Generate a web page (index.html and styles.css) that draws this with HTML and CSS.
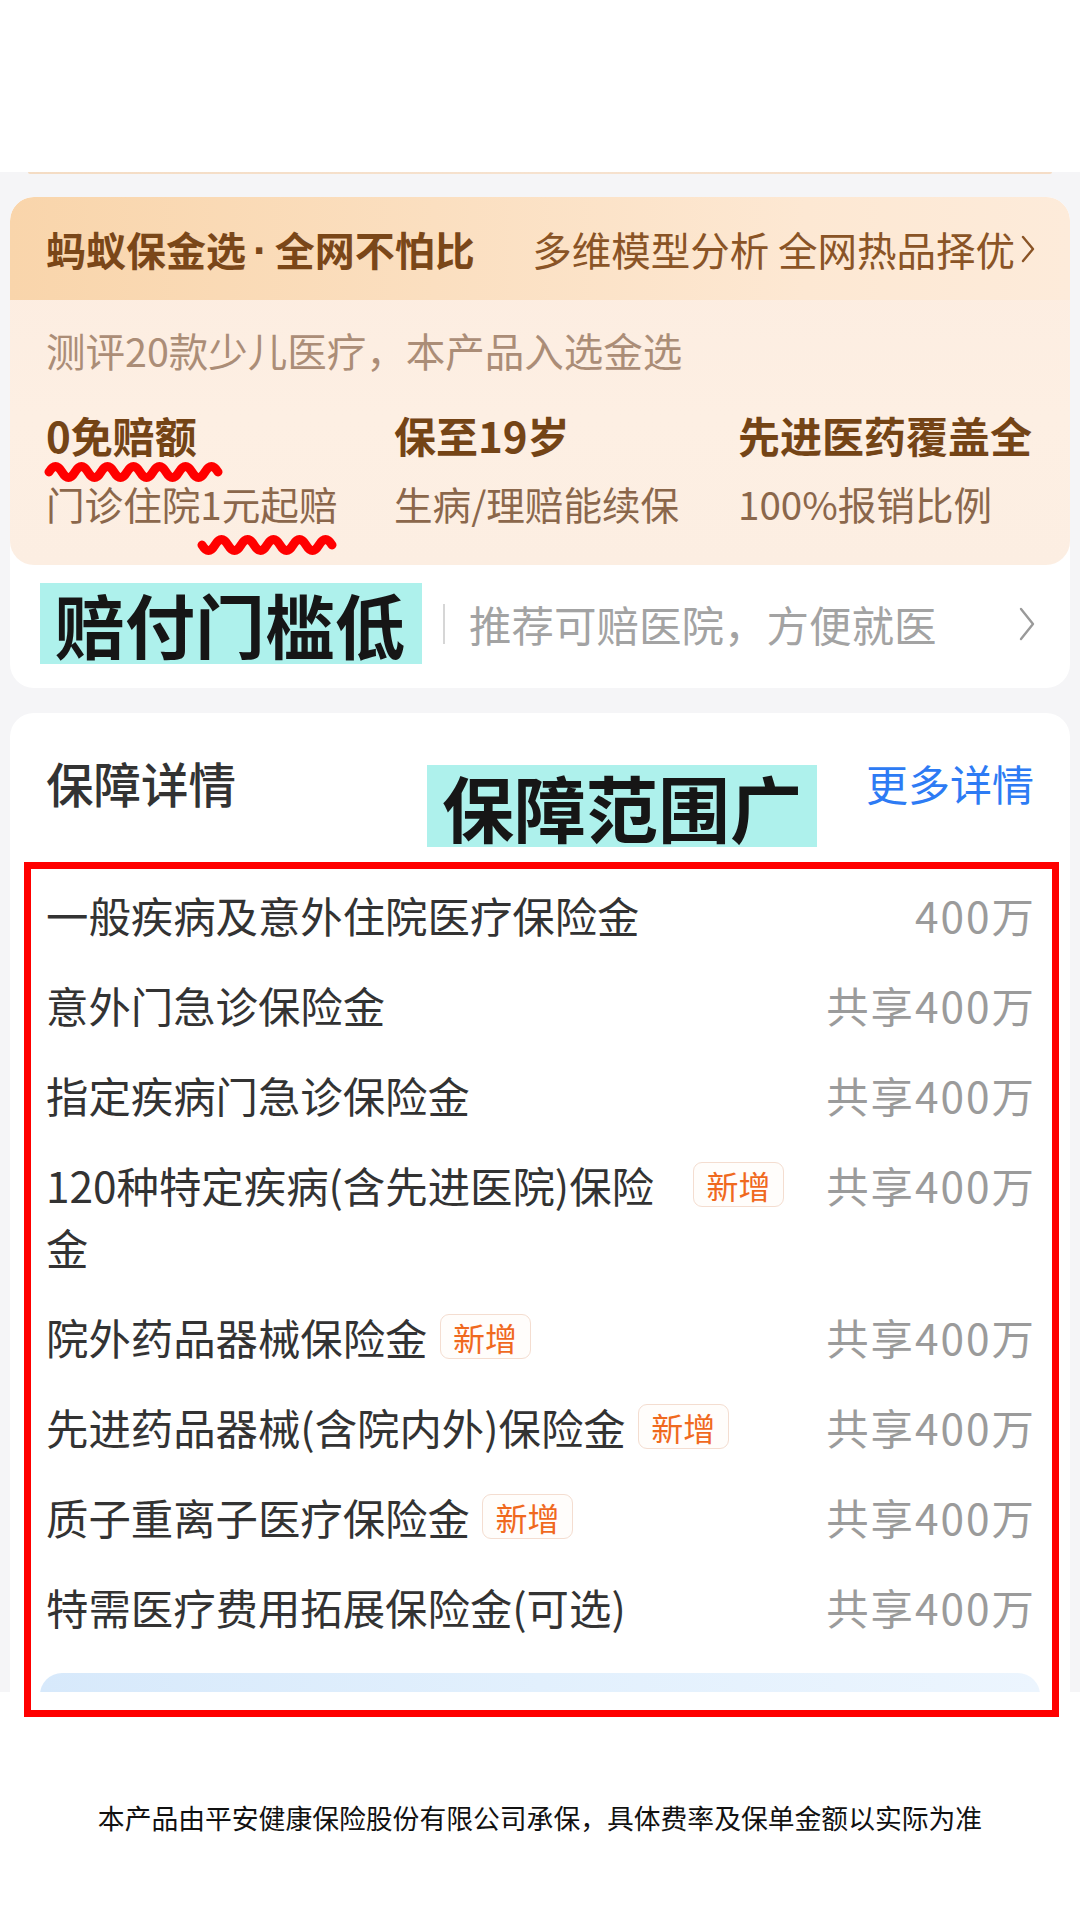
FILE: index.html
```html
<!DOCTYPE html>
<html lang="zh-CN">
<head>
<meta charset="utf-8">
<title>保障详情</title>
<link rel="stylesheet" href="styles.css">
</head>
<body>
<div class="top-blank"></div>
<main class="app">
  <div class="prev-edge"></div>

  <section class="card card-gold">
    <div class="gold">
      <div class="gold-head">
        <span class="gold-title">蚂蚁保金选<span class="dot">·</span>全网不怕比</span>
        <span class="gold-link">多维模型分析 全网热品择优<svg class="chev-gold" viewBox="0 0 16 32" width="16" height="32"><path d="M3 4 L13 16 L3 28" fill="none" stroke="#8a5426" stroke-width="2.4" stroke-linecap="round" stroke-linejoin="round"/></svg></span>
      </div>
      <div class="gold-body">
        <p class="gold-sub">测评20款少儿医疗，本产品入选金选</p>
        <div class="gold-grid">
          <div class="gold-cell"><b>0免赔额</b><span>门诊住院1元起赔</span></div>
          <div class="gold-cell"><b>保至19岁</b><span>生病/理赔能续保</span></div>
          <div class="gold-cell"><b>先进医药覆盖全</b><span>100%报销比例</span></div>
        </div>
      </div>
      <svg class="wave wave-1" viewBox="0 0 182 28" width="182" height="28"><path d="M6 17 q6.5 -11 13 0 t13 0 t13 0 t13 0 t13 0 t13 0 t13 0 t13 0 t13 0 t13 0 t13 0 t13 0 t13 0" fill="none" stroke="#ff0000" stroke-width="9" stroke-linecap="round" stroke-linejoin="round"/></svg>
      <svg class="wave wave-2" viewBox="0 0 142 28" width="142" height="28"><path d="M6 12 q6.5 11 13 0 t13 0 t13 0 t13 0 t13 0 t13 0 t13 0 t13 0 t13 0 t13 0" fill="none" stroke="#ff0000" stroke-width="9" stroke-linecap="round" stroke-linejoin="round"/></svg>
    </div>
    <div class="claim-row">
      <span class="mark">赔付门槛低</span>
      <span class="sep"></span>
      <span class="claim-text">推荐可赔医院，方便就医</span>
      <svg class="chev-gray" viewBox="0 0 18 40" width="18" height="40"><path d="M3 5 L15 20 L3 35" fill="none" stroke="#9a9a9a" stroke-width="2.4" stroke-linecap="round" stroke-linejoin="round"/></svg>
    </div>
  </section>

  <section class="card card-detail">
    <div class="detail-head">
      <h2 class="detail-title">保障详情</h2>
      <span class="mark mark-wide">保障范围广</span>
      <a class="more">更多详情</a>
    </div>
    <ul class="items">
      <li class="item"><div class="item-left"><span class="item-name">一般疾病及意外住院医疗保险金</span></div><span class="item-val">400万</span></li>
      <li class="item"><div class="item-left"><span class="item-name">意外门急诊保险金</span></div><span class="item-val">共享400万</span></li>
      <li class="item"><div class="item-left"><span class="item-name">指定疾病门急诊保险金</span></div><span class="item-val">共享400万</span></li>
      <li class="item"><div class="item-left"><span class="item-name">120种特定疾病(含先进医院)保险金</span><span class="badge">新增</span></div><span class="item-val">共享400万</span></li>
      <li class="item"><div class="item-left"><span class="item-name">院外药品器械保险金</span><span class="badge">新增</span></div><span class="item-val">共享400万</span></li>
      <li class="item"><div class="item-left"><span class="item-name">先进药品器械(含院内外)保险金</span><span class="badge">新增</span></div><span class="item-val">共享400万</span></li>
      <li class="item"><div class="item-left"><span class="item-name">质子重离子医疗保险金</span><span class="badge">新增</span></div><span class="item-val">共享400万</span></li>
      <li class="item"><div class="item-left"><span class="item-name">特需医疗费用拓展保险金(可选)</span></div><span class="item-val">共享400万</span></li>
    </ul>
    <div class="blue-block"></div>
  </section>
</main>
<footer class="footer">本产品由平安健康保险股份有限公司承保，具体费率及保单金额以实际为准</footer>
<div class="red-box"></div>
</body>
</html>
```

FILE: styles.css
```css
* { box-sizing: border-box; }
html, body { margin: 0; padding: 0; }
body {
  width: 1080px;
  height: 1920px;
  overflow: hidden;
  position: relative;
  background: #ffffff;
  font-family: "Noto Sans CJK SC", "Noto Sans", sans-serif;
  color: #333333;
}
.top-blank { height: 172px; background: #ffffff; }

.app {
  height: 1520px;
  background: #f5f5f7;
  overflow: hidden;
}
.prev-edge {
  height: 2px;
  margin: 0 28px;
  background: linear-gradient(90deg, #f4dcc4, #f6e2cf 50%, #f5ddc7);
  border-radius: 0 0 4px 4px;
}

.card {
  margin: 0 10px;
  background: #ffffff;
  border-radius: 24px;
  overflow: hidden;
}
.card-gold { margin-top: 23px; }

.gold {
  position: relative;
  height: 368px;
  border-radius: 24px;
  background: linear-gradient(180deg, #fcece0 0%, #fdefe3 60%, #fceee2 100%);
  overflow: hidden;
}
.gold-head {
  height: 103px;
  padding: 0 34px 0 36px;
  display: flex;
  align-items: center;
  justify-content: space-between;
  background: linear-gradient(90deg, #f9d5ab 0%, #fbdfc0 40%, #fde8d3 75%, #fdebda 100%);
}
.gold-title {
  font-size: 40px;
  font-weight: 700;
  color: #7a4719;
  white-space: nowrap;
}
.dot {
  font-family: "Liberation Sans", sans-serif;
  font-size: 44px;
  margin: 0 7px;
}
.gold-link {
  display: flex;
  align-items: center;
  gap: 5px;
  font-size: 39.5px;
  color: #8a5426;
}
.gold-body { padding: 25px 36px 0 36px; }
.gold-sub {
  margin: 0;
  font-size: 39.5px;
  line-height: 50px;
  color: #ab8d77;
}
.gold-grid {
  margin-top: 32px;
  display: grid;
  grid-template-columns: 348px 344px 1fr;
}
.gold-cell { display: flex; flex-direction: column; }
.gold-cell b {
  font-size: 42px;
  line-height: 56px;
  font-weight: 700;
  color: #744416;
  white-space: nowrap;
}
.gold-cell span {
  margin-top: 12px;
  font-size: 38.6px;
  line-height: 56px;
  color: #8b674b;
  white-space: nowrap;
}
.wave { position: absolute; }
.wave-1 { left: 33px; top: 258px; }
.wave-2 { left: 186px; top: 336px; }

.claim-row {
  height: 123px;
  padding: 0 34px 6px 30px;
  display: flex;
  align-items: center;
}
.mark {
  display: inline-flex;
  align-items: center;
  height: 81px;
  padding: 0 17px 0 15px;
  background: #aef1ec;
  font-size: 70px;
  font-weight: 700;
  color: #161616;
  line-height: 1;
}
.sep {
  width: 2px;
  height: 40px;
  margin-left: 21px;
  background: #d6d6d6;
}
.claim-text {
  margin-left: 24px;
  font-size: 42.5px;
  color: #a3a3a3;
}
.chev-gray { margin-left: auto; }

.card-detail {
  margin-top: 25px;
  border-radius: 24px 24px 0 0;
  padding: 40px 36px 0 36px;
}
.detail-head {
  position: relative;
  height: 60px;
  margin-bottom: 57px;
  display: flex;
  align-items: center;
  justify-content: space-between;
}
.detail-title {
  margin: 0;
  font-size: 47.5px;
  font-weight: 500;
  line-height: 60px;
  color: #333333;
}
.mark-wide {
  position: absolute;
  left: 381px;
  top: 12px;
  width: 390px;
  height: 82px;
  padding: 0;
  justify-content: center;
  font-size: 72px;
}
.more {
  font-size: 42px;
  line-height: 60px;
  color: #2d7bf4;
}

.items { list-style: none; margin: 0; padding: 0; }
.item {
  display: flex;
  align-items: flex-start;
  padding: 14px 0;
}
.item-left {
  flex: 1;
  min-width: 0;
  display: flex;
  align-items: flex-start;
  margin-right: 40px;
}
.item-name {
  font-size: 42.4px;
  line-height: 62px;
  color: #333333;
}
.badge {
  flex: none;
  margin-left: 12px;
  margin-top: 8px;
  height: 45px;
  width: 91px;
  display: flex;
  align-items: center;
  justify-content: center;
  border: 1.5px solid #f4ddd0;
  border-radius: 9px;
  background: #fffdfb;
  font-size: 32px;
  color: #f0691e;
}
.item-val {
  flex: none;
  width: 212px;
  margin-right: -2px;
  text-align: right;
  font-size: 42.4px;
  line-height: 62px;
  letter-spacing: 2px;
  color: #9b9b9b;
}
.blue-block {
  margin: 21px -6px 0 -6px;
  height: 100px;
  border-radius: 22px 22px 0 0;
  background: linear-gradient(90deg, #d7e9fb 0%, #e2f0fd 50%, #ecf5fe 100%);
}

.footer {
  margin-top: 106px;
  text-align: center;
  font-size: 26.8px;
  line-height: 40px;
  color: #111111;
}

.red-box {
  position: absolute;
  left: 24px;
  top: 862px;
  width: 1035px;
  height: 855px;
  border: 7px solid #ff0000;
  pointer-events: none;
}
```
